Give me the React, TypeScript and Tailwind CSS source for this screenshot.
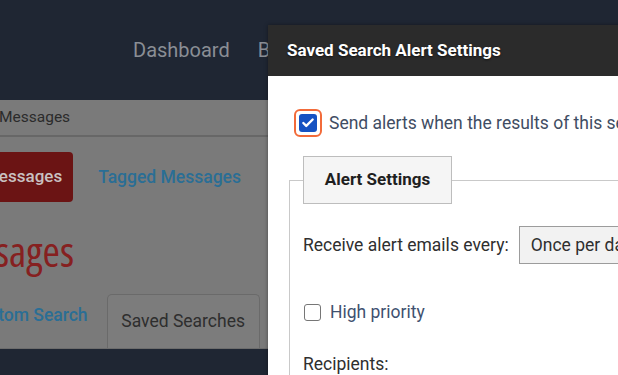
import { Check } from 'lucide-react';

const font = { fontFamily: 'Roboto, "Liberation Sans", sans-serif' };

function PageBehind() {
  return (
    <div className="flex h-[375px] w-[618px] flex-col bg-[#7a7a7a]" style={font}>
      <nav className="flex h-[100px] shrink-0 items-center gap-[28px] bg-[#1f2633] pl-[133px] text-[20px] text-[#8a8e95]">
        <span>Dashboard</span>
        <span>Bulletins</span>
      </nav>
      <div className="flex h-[37px] shrink-0 items-center border-b-2 border-[#676767] text-[15.5px] text-[#2b2b2b]">
        <span className="-ml-[1px]">Messages</span>
      </div>
      <div className="mt-[15px] flex h-[50px] shrink-0 items-center gap-[25px]">
        <span className="-ml-[35px] flex h-[50px] shrink-0 items-center rounded-[4px] bg-[#6b1414] pl-[19px] pr-[11px] text-[17px] font-medium text-[#c9c1c1]">
          Messages
        </span>
        <span className="text-[17.5px] font-medium text-[#2a6e95]">Tagged Messages</span>
      </div>
      <div className="mt-[24px] flex h-[50px] w-[74px] shrink-0 justify-end">
        <h1
          className="whitespace-nowrap text-[42px] font-normal leading-[50px] text-[#862020] [font-stretch:75%]"
          style={{ fontFamily: '"Open Sans", sans-serif' }}
        >
          Messages
        </h1>
      </div>
      <div className="mt-[18px] flex h-[54px] shrink-0 items-end gap-[19px]">
        <span className="-ml-[32px] shrink-0 pb-[20px] text-[17.5px] font-medium text-[#2a6e95]">Custom Search</span>
        <span className="flex h-[54px] w-[153px] shrink-0 items-center justify-center rounded-t-[5px] border border-b-0 border-[#6a6a6a] bg-[#7c7c7c] text-[17.5px] text-[#2e2e2e]">
          Saved Searches
        </span>
      </div>
      <div className="flex-1 border-t border-[#6c6c6c] bg-[#1f2633]" />
    </div>
  );
}

function AlertModal() {
  return (
    <div
      className="absolute left-[268px] top-[25px] w-[400px] bg-white shadow-[0_0_4px_rgba(0,0,0,0.4)]"
      style={font}
    >
      <div className="flex h-[51px] items-center bg-[#2b2b2b] pl-[19px]">
        <h2 className="whitespace-nowrap text-[17px] font-bold text-white [text-shadow:0_1px_2px_rgba(0,0,0,0.6)]">
          Saved Search Alert Settings
        </h2>
      </div>
      <div className="pl-[21px] pt-[33px]">
        <label className="ml-[5px] flex items-center gap-[7px]">
          <span className="flex h-[28px] w-[28px] shrink-0 items-center justify-center rounded-[6px] border-2 border-[#f26b3a]">
            <span className="flex h-[18px] w-[18px] items-center justify-center rounded-[3px] bg-[#1552c2]">
              <Check className="h-[14px] w-[14px] text-white" strokeWidth={4} />
            </span>
          </span>
          <span className="whitespace-nowrap text-[17.5px] text-[#3f4d63]">
            Send alerts when the results of this search change
          </span>
        </label>

        <fieldset className="relative mt-[43px] h-[200px] border-l border-t border-[#c9c9c9] pl-[13px]">
          <div className="-mt-[25px] flex h-[48px] w-[149px] items-center justify-center border border-[#bdbdbd] bg-[#f5f5f5] text-[17px] font-bold text-[#1f1f1f]">
            Alert Settings
          </div>
          <div className="mt-[22px] flex items-center gap-[10px]">
            <span className="shrink-0 whitespace-nowrap text-[17.5px] text-[#2f2f2f]">Receive alert emails every:</span>
            <span className="flex h-[38px] w-[160px] shrink-0 items-center border border-[#9c9c9c] bg-[#f2f2f2] pl-[11px] text-[17.5px] text-[#2f2f2f]">
              Once per day
            </span>
          </div>
          <label className="mt-[35px] flex items-center gap-[9px]">
            <span className="ml-[1px] h-[17px] w-[17px] shrink-0 rounded-[3px] border border-[#767676] bg-white" />
            <span className="text-[17.5px] text-[#3f5170]">High priority</span>
          </label>
          <div className="mt-[26px] text-[17.5px] text-[#2f2f2f]">Recipients:</div>
        </fieldset>
      </div>
    </div>
  );
}

export default function App() {
  return (
    <div className="relative h-[375px] w-[618px] overflow-hidden">
      <PageBehind />
      <AlertModal />
    </div>
  );
}
